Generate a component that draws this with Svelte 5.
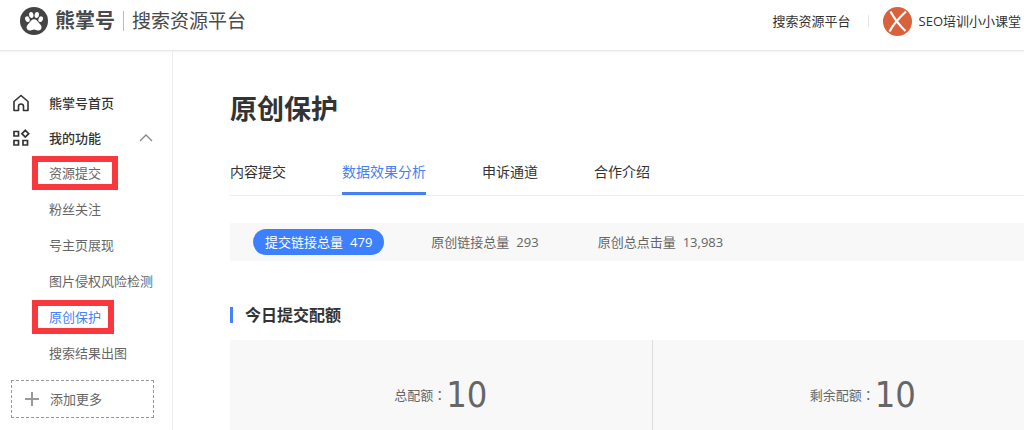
<script>
  const menu = [
    { text: '资源提交', marked: true },
    { text: '粉丝关注' },
    { text: '号主页展现' },
    { text: '图片侵权风险检测' },
    { text: '原创保护', marked: true, current: true },
    { text: '搜索结果出图' },
  ];
  const tabs = ['内容提交', '数据效果分析', '申诉通道', '合作介绍'];
  const stats = [
    { name: '提交链接总量', value: '479' },
    { name: '原创链接总量', value: '293' },
    { name: '原创总点击量', value: '13,983' },
  ];
  const quotas = [
    { name: '总配额', value: 10 },
    { name: '剩余配额', value: 10 },
  ];

  let activeTab = $state(1);
  let activeStat = $state(0);
  let open = $state(true);
</script>

<div class="page">
  <header>
    <a class="logo" href="#home">
      <svg class="paw" viewBox="0 0 28 28" aria-hidden="true">
        <circle cx="14" cy="14" r="14" fill="#444" />
        <g fill="#fff">
          <ellipse cx="7.400" cy="12.200" rx="2.200" ry="2.900" transform="rotate(-22 7.4 12.2)" />
          <ellipse cx="11.300" cy="8" rx="2.200" ry="3.100" transform="rotate(-6 11.3 8)" />
          <ellipse cx="16.800" cy="8" rx="2.200" ry="3.100" transform="rotate(6 16.8 8)" />
          <ellipse cx="20.700" cy="12.200" rx="2.200" ry="2.900" transform="rotate(22 20.7 12.2)" />
          <path d="M14.100 12.300c2.200 0 3.200 1.600 4.300 3 1.300 1.600 3.300 3 3.200 5.200-.1 2.200-1.900 3.100-3.700 2.900-1.300-.1-2.500-.9-3.800-.9s-2.500.8-3.800.9c-1.800.2-3.600-.7-3.700-2.900-.1-2.200 1.900-3.600 3.200-5.200 1.100-1.400 2.100-3 4.300-3z" />
        </g>
      </svg>
      <strong>熊掌号</strong>
      <span class="platform">搜索资源平台</span>
    </a>
    <nav class="account">
      <a href="#platform">搜索资源平台</a>
      <a class="user" href="#user">
        <svg viewBox="0 0 29 29" aria-hidden="true">
          <circle cx="14.500" cy="14.500" r="14.500" fill="#d9613c" />
          <path d="M7.500 4.500C11 11 16 18 22.500 24M23 4.500C17 10 10.500 17 6.500 24.500" fill="none" stroke="#fff" stroke-width="2.200" />
        </svg>
        SEO培训小小课堂
      </a>
    </nav>
  </header>

  <div class="body">
    <aside>
      <a class="top" href="#index">
        <svg viewBox="0 0 18 18" aria-hidden="true">
          <path d="M2 7.500 9 1.500l7 6V16.500h-4.500v-4a2.500 2.500 0 0 0-5 0v4H2z" fill="none" stroke="#333" stroke-width="1.600" stroke-linejoin="round" />
        </svg>
        熊掌号首页
      </a>
      <button class="top" aria-expanded={open} onclick={() => (open = !open)}>
        <svg viewBox="0 0 18 18" aria-hidden="true">
          <path d="M2 2.500h4.500V7H2zM2 11.500h4.500V16H2zM11 11.500h4.500V16H11zM13.300 1.300l3.400 3.400-3.400 3.400-3.400-3.400z" fill="none" stroke="#333" stroke-width="1.700" />
        </svg>
        我的功能
        <svg class="arrow" class:closed={!open} viewBox="0 0 14 8" aria-hidden="true">
          <path d="M1 7l6-6 6 6" fill="none" stroke="#888" stroke-width="1.300" />
        </svg>
      </button>
      {#if open}
        <ul>
          {#each menu as item}
            <li>
              <a href="#menu" class:marked={item.marked} class:current={item.current}>{item.text}</a>
            </li>
          {/each}
        </ul>
      {/if}
      <button class="add">
        <svg viewBox="0 0 14 14" aria-hidden="true">
          <path d="M7 0v14M0 7h14" stroke="#999" stroke-width="2" />
        </svg>
        添加更多
      </button>
    </aside>

    <main>
      <h1>原创保护</h1>
      <div class="tabs">
        {#each tabs as tab, i}
          <button class:active={activeTab === i} onclick={() => (activeTab = i)}>{tab}</button>
        {/each}
      </div>
      <div class="stats">
        {#each stats as stat, i}
          <button class:active={activeStat === i} onclick={() => (activeStat = i)}>
            <span>{stat.name}</span>
            <span>{stat.value}</span>
          </button>
        {/each}
      </div>
      <h2>今日提交配额</h2>
      <div class="quotas">
        {#each quotas as quota}
          <div class="quota">
            <span>{quota.name}<span class="colon">：</span></span>
            <span class="number">{quota.value}</span>
          </div>
        {/each}
      </div>
    </main>
  </div>
</div>

<style>
  :global(body) {
    margin: 0;
    background: #fff;
  }
  .page {
    height: 100vh;
    overflow: hidden;
    font-family: 'Open Sans', 'Noto Sans CJK SC', sans-serif;
    font-size: 13px;
    line-height: 20px;
    color: #333;
  }
  a {
    color: inherit;
    text-decoration: none;
  }
  button {
    padding: 0;
    border: 0;
    background: none;
    font: inherit;
    color: inherit;
    cursor: pointer;
  }

  header {
    display: flex;
    align-items: center;
    justify-content: space-between;
    box-sizing: border-box;
    height: 51px;
    padding: 0 3px 8px 20px;
    border-bottom: 1px solid #e8e8e8;
    box-shadow: 0 1px 2px rgba(0, 0, 0, 0.06);
  }
  .logo {
    display: flex;
    align-items: center;
    color: #4a4a4a;
  }
  .paw {
    width: 28px;
    height: 28px;
    margin-right: 7px;
  }
  .logo strong {
    font-size: 20px;
    font-weight: 700;
  }
  .platform {
    margin-left: 8px;
    padding-left: 8px;
    border-left: 1px solid #bbb;
    font-size: 19px;
  }
  .account,
  .user {
    display: flex;
    align-items: center;
  }
  .user {
    gap: 7px;
    margin-left: 17px;
  }
  .user::before {
    content: '';
    width: 1px;
    height: 12px;
    margin-right: 7px;
    background: #e4e4e4;
  }
  .user svg {
    width: 29px;
    height: 29px;
  }

  .body {
    display: flex;
    min-height: 100%;
  }
  aside {
    flex: none;
    box-sizing: border-box;
    width: 173px;
    padding-top: 34px;
    border-right: 1px solid #ececec;
  }
  .top {
    display: flex;
    align-items: center;
    gap: 19px;
    box-sizing: border-box;
    width: 100%;
    height: 35px;
    padding: 0 19px 0 12px;
    font-weight: 500;
  }
  .top svg {
    width: 18px;
    height: 18px;
  }
  .top .arrow {
    width: 14px;
    height: 8px;
    margin-left: auto;
  }
  .arrow.closed {
    transform: rotate(180deg);
  }
  ul {
    margin: 0;
    padding: 0 0 0 32px;
    list-style: none;
  }
  li {
    display: flex;
    align-items: center;
    height: 36px;
  }
  li a {
    padding: 1px 11px;
    border: 6px solid transparent;
    color: #666;
    white-space: nowrap;
  }
  li .marked {
    border-color: #f8383d;
  }
  li .current {
    padding-right: 7px;
    color: #4680ff;
  }
  .add {
    display: flex;
    align-items: center;
    gap: 11px;
    box-sizing: border-box;
    width: 143px;
    height: 38px;
    margin: 9px 0 0 11px;
    padding-left: 13px;
    border: 1px dashed #999;
    color: #666;
  }
  .add svg {
    width: 14px;
    height: 14px;
  }

  main {
    flex: 1 0 auto;
    min-width: 843px;
    padding: 38px 57px 0;
  }
  h1 {
    margin: 0;
    font-size: 27px;
    font-weight: 700;
    line-height: 40px;
  }
  .tabs {
    display: flex;
    gap: 56px;
    height: 44px;
    margin-top: 22px;
    border-bottom: 1px solid #eee;
    font-size: 14px;
  }
  .tabs button {
    border-bottom: 3px solid transparent;
  }
  .tabs .active {
    border-color: #4680f5;
    color: #4680f5;
  }
  .stats {
    display: flex;
    align-items: center;
    gap: 35px;
    height: 38px;
    margin-top: 27px;
    padding-left: 23px;
    background: #f8f8f8;
    color: #666;
  }
  .stats button {
    display: flex;
    align-items: center;
    gap: 7px;
    height: 26px;
    padding: 0 12px;
    border-radius: 13px;
  }
  .stats .active {
    background: #3d80ff;
    color: #fff;
  }
  h2 {
    display: flex;
    align-items: center;
    gap: 12px;
    margin: 42px 0 13px;
    font-size: 16px;
    font-weight: 700;
    line-height: 24px;
  }
  h2::before {
    content: '';
    width: 3px;
    height: 16px;
    background: #4680ff;
  }
  .quotas {
    display: grid;
    grid-template-columns: 1fr 1fr;
    background: #f8f8f8;
    color: #666;
  }
  .quota {
    display: flex;
    align-items: center;
    justify-content: center;
    height: 110px;
  }
  .quota + .quota {
    border-left: 1px solid #ddd;
  }
  .colon {
    font-family: 'Noto Sans CJK TC', sans-serif;
  }
  .number {
    font-family: 'DejaVu Sans Condensed', 'DejaVu Sans', sans-serif;
    font-size: 36px;
    line-height: 40px;
  }
</style>
